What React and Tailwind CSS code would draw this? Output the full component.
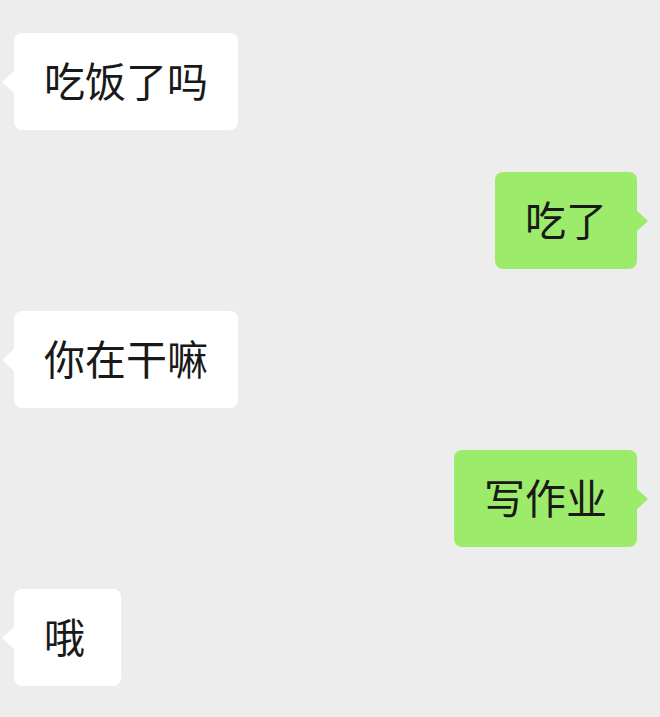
import React from 'react';

const messages = [
  { id: 1, text: '吃饭了吗', mine: false },
  { id: 2, text: '吃了', mine: true },
  { id: 3, text: '你在干嘛', mine: false },
  { id: 4, text: '写作业', mine: true },
  { id: 5, text: '哦', mine: false },
];

const Bubble = ({ text, mine }) => (
  <div className={mine ? 'flex justify-end' : 'flex justify-start'}>
    <div
      className={
        'relative flex items-center h-[97px] min-w-[107px] px-[30px] pb-[4px] rounded-[8px] text-[41px] leading-none text-[#191919] ' +
        (mine ? 'bg-[#9deb6b]' : 'bg-white')
      }
    >
      {mine ? (
        <span className="absolute top-1/2 -translate-y-1/2 right-[-11px] w-0 h-0 border-y-[11px] border-y-transparent border-l-[12px] border-l-[#9deb6b]" />
      ) : (
        <span className="absolute top-1/2 -translate-y-1/2 left-[-12px] w-0 h-0 border-y-[11px] border-y-transparent border-r-[12px] border-r-white" />
      )}
      <span>{text}</span>
    </div>
  </div>
);

const App = () => {
  return (
    <div
      className="min-h-screen bg-[#ededed] pt-[33px] pl-[14px] pr-[23px] flex flex-col gap-[42px]"
      style={{ fontFamily: '"Noto Sans CJK SC", "Noto Sans", sans-serif' }}
    >
      {messages.map((m) => (
        <Bubble key={m.id} text={m.text} mine={m.mine} />
      ))}
    </div>
  );
};

export default App;
